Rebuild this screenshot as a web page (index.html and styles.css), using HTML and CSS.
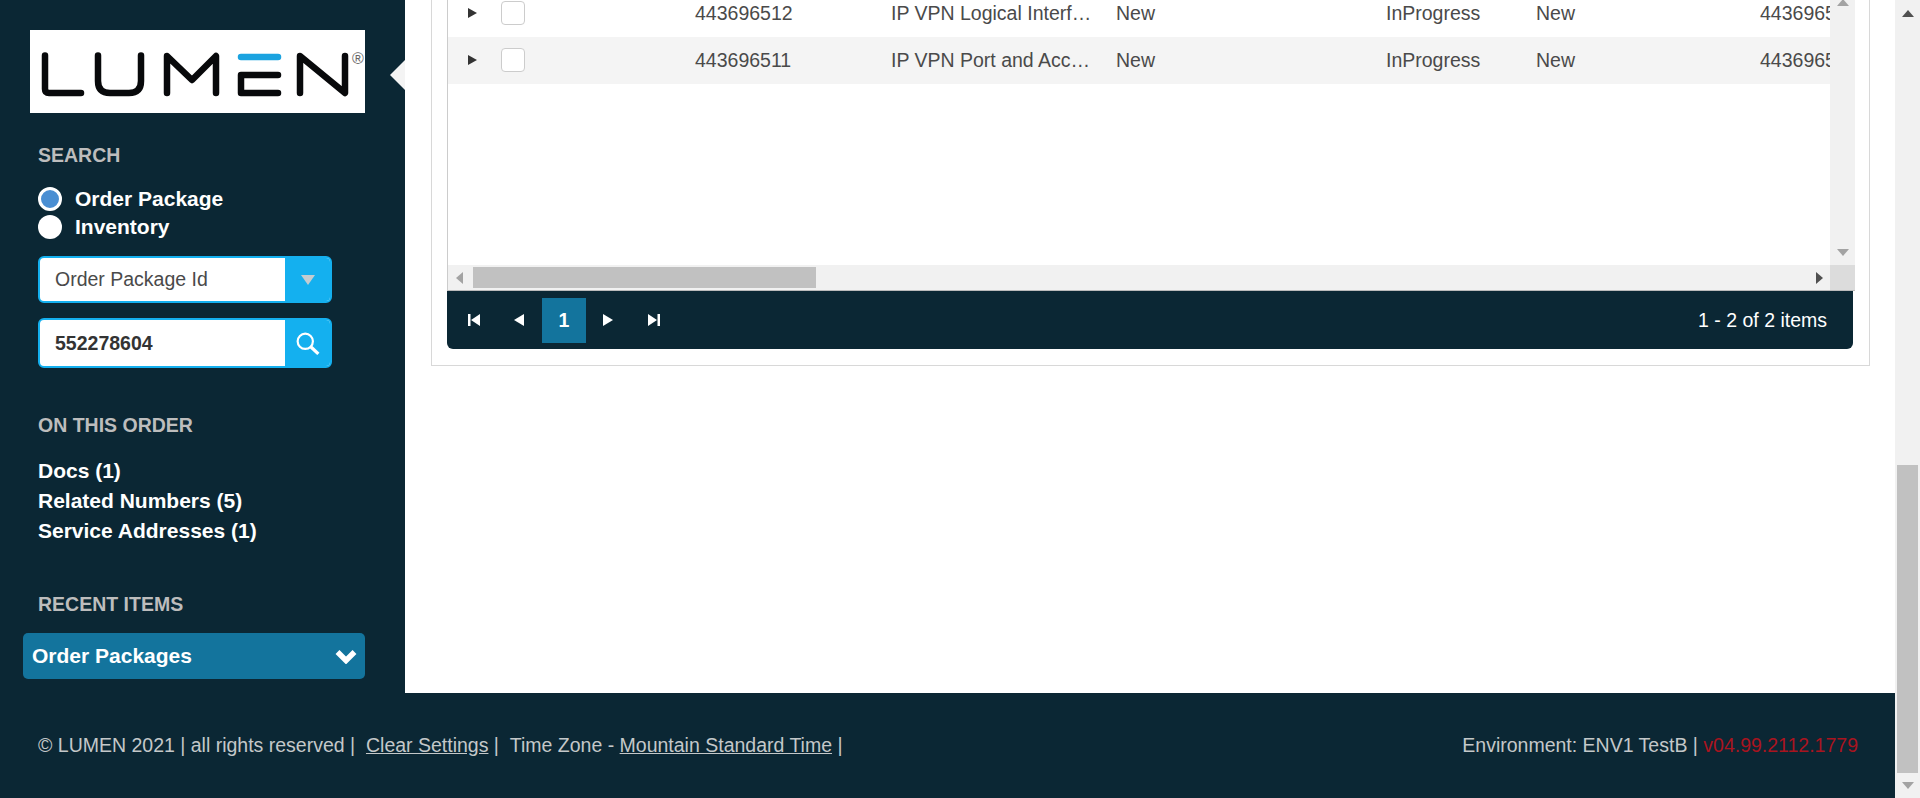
FILE: index.html
```html
<!DOCTYPE html>
<html lang="en">
<head>
    <meta charset="UTF-8">
    <meta name="viewport" content="width=device-width, initial-scale=1.0">
    <title>Order Packages</title>
    <link rel="stylesheet" href="styles.css">
</head>
<body>
    <div class="page">
        <div class="view">
            <div class="content">
                <aside class="sidebar">
                    <div class="logo">
                        <svg width="335" height="83" viewBox="0 0 335 83" fill="none" stroke="#08090b" stroke-width="6.5" stroke-linecap="round" stroke-linejoin="round">
                            <path d="M15 25.5V59Q15 63 19 63H51"/>
                            <path d="M68 25.5V51Q68 63 80 63H99Q111 63 111 51V25.5"/>
                            <path d="M137 63V26L162 50L186 26V63"/>
                            <path d="M211 27H248" stroke="#1ba3e0" stroke-width="6.5"/>
                            <path d="M248 45H211V63H248"/>
                            <path d="M270 63V26L315 63V26"/>
                            <text x="328" y="34" class="logo-mark" text-anchor="middle">®</text>
                        </svg>
                    </div>
                    <div class="logo-notch"></div>

                    <h3 class="side-title search-title">SEARCH</h3>
                    <label class="radio-row"><input type="radio" name="scope" checked> Order Package</label>
                    <label class="radio-row"><input type="radio" name="scope"> Inventory</label>

                    <div class="field select-field">
                        <span class="field-value">Order Package Id</span>
                        <span class="field-btn">
                            <svg width="14" height="10" viewBox="0 0 14 10"><path d="M0 0H14L7 10Z" fill="#c4ccd0"/></svg>
                        </span>
                    </div>
                    <div class="field search-field">
                        <span class="field-value strong">552278604</span>
                        <span class="field-btn">
                            <svg width="24" height="23" viewBox="0 0 22 21" fill="none" stroke="#fff" stroke-width="2"><circle cx="8.500" cy="8.500" r="7"/><path d="M13.500 13.500L20.500 20" stroke-width="3"/></svg>
                        </span>
                    </div>

                    <h3 class="side-title order-title">ON THIS ORDER</h3>
                    <ul class="side-links">
                        <li>Docs (1)</li>
                        <li>Related Numbers (5)</li>
                        <li>Service Addresses (1)</li>
                    </ul>

                    <h3 class="side-title recent-title">RECENT ITEMS</h3>
                    <div class="recent-bar">
                        <span>Order Packages</span>
                        <svg width="22" height="16" viewBox="0 0 22 16" fill="none" stroke="#fff" stroke-width="5.500"><path d="M2.500 4L11 12.500L19.500 4"/></svg>
                    </div>
                </aside>

                <main class="main">
                    <div class="panel">
                        <div class="grid">
                            <div class="grid-body">
                                <div class="grid-rows">
                                    <div class="row">
                                        <span class="cell"><span class="expander"></span></span>
                                        <span class="cell"><span class="checkbox"></span></span>
                                        <span class="cell">443696512</span>
                                        <span class="cell truncate">IP VPN Logical Interface</span>
                                        <span class="cell">New</span>
                                        <span class="cell">InProgress</span>
                                        <span class="cell">New</span>
                                        <span class="cell">443696510</span>
                                    </div>
                                    <div class="row alt">
                                        <span class="cell"><span class="expander"></span></span>
                                        <span class="cell"><span class="checkbox"></span></span>
                                        <span class="cell">443696511</span>
                                        <span class="cell truncate">IP VPN Port and Access</span>
                                        <span class="cell">New</span>
                                        <span class="cell">InProgress</span>
                                        <span class="cell">New</span>
                                        <span class="cell">443696510</span>
                                    </div>
                                </div>
                                <div class="vscroll">
                                    <span class="arrow up faint top-clip"></span>
                                    <span class="arrow down faint"></span>
                                </div>
                            </div>
                            <div class="hscroll">
                                <div class="hscroll-track">
                                    <span class="arrow left faint"></span>
                                    <span class="hthumb"></span>
                                    <span class="arrow right"></span>
                                </div>
                                <span class="corner"></span>
                            </div>
                            <div class="pager">
                                <div class="pager-nav">
                                    <span class="pager-btn"><svg width="12" height="12" viewBox="0 0 12 12" fill="#fff"><path d="M0 0H2.500V12H0ZM12 0V12L3 6Z"/></svg></span>
                                    <span class="pager-btn"><svg width="11" height="12" viewBox="0 0 11 12" fill="#fff"><path d="M11 0V12L1 6Z"/></svg></span>
                                    <span class="pager-num">1</span>
                                    <span class="pager-btn"><svg width="11" height="12" viewBox="0 0 11 12" fill="#fff"><path d="M0 0V12L10 6Z"/></svg></span>
                                    <span class="pager-btn"><svg width="12" height="12" viewBox="0 0 12 12" fill="#fff"><path d="M12 0H9.500V12H12ZM0 0V12L9 6Z"/></svg></span>
                                </div>
                                <span class="pager-info">1 - 2 of 2 items</span>
                            </div>
                        </div>
                    </div>
                </main>
            </div>
            <footer class="footer">
                <div>© LUMEN 2021 | all rights reserved | &nbsp;<a>Clear Settings</a> | &nbsp;Time Zone - <a>Mountain Standard Time</a> |</div>
                <div>Environment: ENV1 TestB | <span class="version">v04.99.2112.1779</span></div>
            </footer>
        </div>
        <div class="page-scroll">
            <span class="arrow up dark"></span>
            <span class="page-thumb"></span>
            <span class="arrow down faint"></span>
        </div>
    </div>
</body>
</html>
```
FILE: styles.css
```css
html, body {
    margin: 0;
    height: 100%;
    overflow: hidden;
}

body {
    font-family: "Liberation Sans", Arial, sans-serif;
    font-size: 19.5px;
    color: #4a4a4a;
    background-color: #fff;
}

.page {
    display: flex;
    height: 798px;
}

.view {
    flex: 1;
    min-width: 0;
    display: flex;
    flex-direction: column;
}

.content {
    flex: 1;
    min-height: 0;
    display: flex;
}

/* sidebar */
.sidebar {
    position: relative;
    width: 405px;
    flex-shrink: 0;
    box-sizing: border-box;
    padding: 30px 40px 0 38px;
    background-color: #0b2734;
}

.logo {
    width: 335px;
    height: 83px;
    margin-left: -8px;
    background-color: #fff;
}

.logo svg {
    display: block;
}

.logo-mark {
    font-family: "Liberation Sans", Arial, sans-serif;
    font-size: 16px;
    fill: #666;
    stroke: none;
}

.logo-notch {
    position: absolute;
    right: 0;
    top: 60px;
    border-top: 15px solid transparent;
    border-bottom: 15px solid transparent;
    border-right: 15px solid #f4f4f4;
}

.side-title {
    margin: 0;
    font-size: 19.5px;
    line-height: 24px;
    font-weight: bold;
    color: #bdbdbd;
}

.search-title {
    margin-top: 30px;
}

.radio-row {
    display: flex;
    align-items: center;
    height: 28px;
    gap: 13px;
    font-size: 21px;
    font-weight: bold;
    color: #fff;
}

.search-title + .radio-row {
    margin-top: 18px;
}

.radio-row input {
    appearance: none;
    width: 24px;
    height: 24px;
    margin: 0;
    border-radius: 50%;
    background-color: #fff;
}

.radio-row input:checked {
    background-color: #4a8fd3;
    border: 3px solid #fff;
    box-sizing: border-box;
}

.field {
    display: flex;
    box-sizing: border-box;
    width: 294px;
    border: 2px solid #14b0ef;
    border-radius: 6px;
    background-color: #fff;
    overflow: hidden;
}

.select-field {
    height: 47px;
    margin-top: 15px;
}

.search-field {
    height: 50px;
    margin-top: 15px;
}

.field-value {
    flex: 1;
    align-self: center;
    padding-left: 15px;
    color: #4a4a4a;
}

.field-value.strong {
    font-weight: bold;
    color: #333;
}

.field-btn {
    display: flex;
    align-items: center;
    justify-content: center;
    width: 45px;
    background-color: #14b0ef;
}

.order-title {
    margin-top: 45px;
}

.side-links {
    margin: 19px 0 0;
    padding: 0;
    list-style: none;
    font-size: 21px;
    font-weight: bold;
    line-height: 30px;
    color: #fff;
}

.recent-title {
    margin-top: 46px;
}

.recent-bar {
    display: flex;
    align-items: center;
    justify-content: space-between;
    box-sizing: border-box;
    width: 342px;
    height: 46px;
    margin: 17px 0 0 -15px;
    padding: 0 8px 0 9px;
    border-radius: 5px;
    background-color: #13749d;
    font-size: 21px;
    font-weight: bold;
    color: #fff;
}

/* main panel */
.main {
    flex: 1;
    min-width: 0;
    padding: 0 25px 0 26px;
    background-color: #fff;
}

.panel {
    box-sizing: border-box;
    height: 366px;
    padding: 0 14px 16px 15px;
    border: 1px solid #d8d8d8;
    border-top: none;
}

.grid-body {
    display: flex;
    height: 265px;
    border-left: 1px solid #ccc;
}

.grid-rows {
    flex: 1;
    min-width: 0;
    overflow: hidden;
}

.row {
    display: grid;
    grid-template-columns: 53px 194px 196px 225px 270px 150px 224px 200px;
    align-items: center;
    height: 47px;
    padding-bottom: 1px;
    box-sizing: border-box;
    white-space: nowrap;
}

.row:first-child {
    margin-top: -10px;
}

.row.alt {
    background-color: #f4f4f4;
}

.truncate {
    overflow: hidden;
    text-overflow: ellipsis;
    padding-right: 22px;
}

.expander {
    display: block;
    margin-left: 20px;
    width: 0;
    height: 0;
    border-top: 5.500px solid transparent;
    border-bottom: 5.500px solid transparent;
    border-left: 9px solid #333;
}

.checkbox {
    display: block;
    box-sizing: border-box;
    width: 24px;
    height: 24px;
    border: 1px solid #ccc;
    border-radius: 4px;
    background-color: #fff;
}

.vscroll {
    display: flex;
    flex-direction: column;
    justify-content: space-between;
    align-items: center;
    box-sizing: border-box;
    width: 25px;
    flex-shrink: 0;
    padding-bottom: 9px;
    background-color: #f1f1f1;
}

.arrow {
    display: block;
    width: 0;
    height: 0;
}

.arrow.up {
    border-left: 6px solid transparent;
    border-right: 6px solid transparent;
    border-bottom: 7px solid #a3a3a3;
}

.arrow.down {
    border-left: 6px solid transparent;
    border-right: 6px solid transparent;
    border-top: 7px solid #a3a3a3;
}

.arrow.left {
    border-top: 6px solid transparent;
    border-bottom: 6px solid transparent;
    border-right: 7px solid #a3a3a3;
}

.arrow.right {
    border-top: 6px solid transparent;
    border-bottom: 6px solid transparent;
    border-left: 7px solid #505050;
}

.arrow.up.dark {
    border-bottom-color: #505050;
}

.arrow.top-clip {
    margin-top: -1px;
}

.hscroll {
    display: flex;
    height: 26px;
    box-sizing: border-box;
    border-left: 1px solid #ccc;
    border-bottom: 1px solid #bbb;
}

.hscroll-track {
    flex: 1;
    display: flex;
    align-items: center;
    padding: 0 7px 0 8px;
    background-color: #f1f1f1;
}

.hthumb {
    width: 343px;
    height: 21px;
    margin-left: 10px;
    margin-right: auto;
    background-color: #c1c1c1;
}

.corner {
    width: 25px;
    background-color: #dcdcdc;
}

.pager {
    display: flex;
    align-items: center;
    justify-content: space-between;
    box-sizing: border-box;
    height: 58px;
    margin-right: 2px;
    padding: 0 26px 0 4px;
    border-radius: 0 0 6px 6px;
    background-color: #0b2734;
    color: #fff;
}

.pager-nav {
    display: flex;
    align-items: center;
    height: 45px;
}

.pager-btn {
    display: flex;
    align-items: center;
    justify-content: center;
    width: 45px;
    height: 45px;
}

.pager-num {
    display: flex;
    align-items: center;
    justify-content: center;
    width: 44px;
    height: 45px;
    margin-left: 1px;
    background-color: #13749d;
    font-weight: bold;
}

/* footer */
.footer {
    flex-shrink: 0;
    display: flex;
    align-items: center;
    justify-content: space-between;
    height: 105px;
    padding: 0 37px 1px 38px;
    box-sizing: border-box;
    background-color: #0b2734;
    color: #c4c8c9;
}

.footer a {
    text-decoration: underline;
}

.version {
    color: #a9141f;
}

/* page scrollbar */
.page-scroll {
    display: flex;
    flex-direction: column;
    align-items: center;
    width: 25px;
    flex-shrink: 0;
    background-color: #f1f1f1;
}

.page-scroll .arrow.up {
    margin-top: 10px;
}

.page-thumb {
    width: 21px;
    height: 308px;
    margin-top: 448px;
    background-color: #c1c1c1;
}

.page-scroll .arrow.down {
    margin-top: 9px;
}
```
